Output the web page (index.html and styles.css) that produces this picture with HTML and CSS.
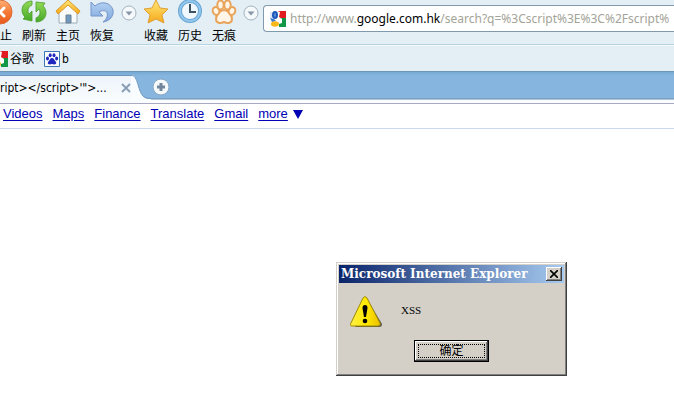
FILE: index.html
```html
<!DOCTYPE html>
<html lang="zh-CN">
<head>
<meta charset="utf-8">
<title>Google</title>
<link rel="stylesheet" href="styles.css">
</head>
<body>
<svg class="defs" aria-hidden="true">
  <defs>
    <linearGradient id="orange" x1="0" y1="0" x2="0" y2="1"><stop offset="0" stop-color="#ffb27a"/><stop offset=".5" stop-color="#f47a35"/><stop offset="1" stop-color="#e8591c"/></linearGradient>
    <linearGradient id="green" x1="0" y1="0" x2="0" y2="1"><stop offset="0" stop-color="#92d957"/><stop offset="1" stop-color="#45aa28"/></linearGradient>
    <linearGradient id="blue" x1="0" y1="0" x2="0" y2="1"><stop offset="0" stop-color="#b3d0f2"/><stop offset="1" stop-color="#7fa8dd"/></linearGradient>
    <linearGradient id="gold" x1="0" y1="0" x2="0" y2="1"><stop offset="0" stop-color="#ffe777"/><stop offset="1" stop-color="#f6a81b"/></linearGradient>
    <linearGradient id="warn" x1="0" y1="0" x2="1" y2="0"><stop offset="0" stop-color="#fff04a"/><stop offset=".55" stop-color="#ffe800"/><stop offset="1" stop-color="#eabf00"/></linearGradient>
    <symbol id="drop" viewBox="0 0 16 16"><circle cx="8" cy="8" r="7" fill="#f5f9fb" stroke="#a3b2bf"/><path d="M4.5 6.5h7L8 10.500z" fill="#8797a8"/></symbol>
    <symbol id="google" viewBox="0 0 16 16"><path d="M8 0h8v8H9z" fill="#e01b22"/><path d="M9 7h7v9H9z" fill="#119747"/><path d="M0 1h3v6H0z" fill="#dce8fa"/><path d="M7 0l3 1-1 5 3 2v4l-3 1-4-3 2-3z" fill="#fff"/><ellipse cx="5" cy="4" rx="3" ry="4" fill="#1b57b8"/><path d="M0 7l4 1 2 2-4 1z" fill="#3977cc"/><ellipse cx="5" cy="13" rx="4" ry="2.700" fill="#f9b817"/><ellipse cx="5" cy="4" rx="1" ry="2" fill="#5a8cd8"/></symbol>
  </defs>
</svg>

<header class="browser">
  <div class="toolbar">
    <button class="tool" type="button">
      <svg viewBox="0 0 26 26"><circle cx="13" cy="12" r="12" fill="url(#orange)" stroke="#dd6a38"/><path d="M9 8l8 8M17 8l-8 8" stroke="#fff" stroke-width="3" stroke-linecap="round"/></svg>
      <span>停止</span>
    </button>
    <button class="tool" type="button">
      <svg viewBox="0 0 26 26"><g fill="url(#green)" stroke="#4a9d2b" stroke-width=".8" stroke-linejoin="round"><path d="M11 1C5 1 1 5 1 10c0 3 1 5 3 7l-2 2 9 2V11l-3 3C6 10 7 7 11 5z"/><path d="M15 22c6 0 10-4 10-9 0-3-1-5-3-7l2-3-9-1v10l3-3c2 4 1 7-3 9z"/></g></svg>
      <span>刷新</span>
    </button>
    <button class="tool" type="button">
      <svg viewBox="0 0 26 26"><path d="M4 11v12h18V11l-9-8z" fill="#f8fafc" stroke="#9eacb8"/><path d="M11 15h5v8h-5z" fill="#7198bd" stroke="#6c8194"/><path d="M13 0L1 11l2 3L13 5l10 9 2-3z" fill="url(#gold)" stroke="#d99a25" stroke-linejoin="round"/></svg>
      <span>主页</span>
    </button>
    <button class="tool" type="button">
      <svg viewBox="0 0 26 26"><path d="M2 2v14h12l-4-4c5-3 10-1 8 5-1 2-2 4-4 5 7-1 11-6 10-12C22 3 13 0 6 6z" fill="url(#blue)" stroke="#7594c9" stroke-linejoin="round"/></svg>
      <span>恢复</span>
    </button>
    <button class="more" type="button" aria-label="更多恢复选项"><svg viewBox="0 0 16 16"><use href="#drop"/></svg></button>
    <button class="tool" type="button">
      <svg viewBox="0 0 26 26"><path d="M13 0l4 8 8 1-6 6 2 8-8-4-8 4 2-8-6-6 8-1z" fill="url(#gold)" stroke="#e0a037" stroke-linejoin="round"/></svg>
      <span>收藏</span>
    </button>
    <button class="tool" type="button">
      <svg viewBox="0 0 26 26"><circle cx="13" cy="11" r="10" fill="#f0f8fd" stroke="#67a5d4" stroke-width="4"/><circle cx="13" cy="11" r="10" fill="none" stroke="#91c5eb" stroke-width="2"/><path d="M13 4v8h6" fill="none" stroke="#3c5366" stroke-width="2"/></svg>
      <span>历史</span>
    </button>
    <button class="tool" type="button">
      <svg viewBox="0 0 26 26"><g fill="#fff6e8" stroke="#e9a45b" stroke-width="2"><path d="M13 10c-4 0-8 5-8 9 0 4 4 5 8 3 4 2 8 1 8-3 0-4-4-9-8-9z"/><ellipse cx="5" cy="11" rx="3.200" ry="4" transform="rotate(-20 5 11)"/><ellipse cx="9.500" cy="5" rx="3.200" ry="4.500"/><ellipse cx="16.500" cy="5" rx="3.200" ry="4.500"/><ellipse cx="21" cy="11" rx="3.200" ry="4" transform="rotate(20 21 11)"/></g></svg>
      <span>无痕</span>
    </button>
    <button class="more" type="button" aria-label="更多无痕选项"><svg viewBox="0 0 16 16"><use href="#drop"/></svg></button>
    <div class="address">
      <svg class="favicon" viewBox="0 0 16 16"><use href="#google"/></svg>
      <div class="url">http://www.<b>google.com.hk</b>/search?q=%3Cscript%3E%3C%2Fscript%</div>
    </div>
  </div>

  <nav class="bookmarks" aria-label="书签">
    <a href="#"><svg class="favicon" viewBox="0 0 16 16"><use href="#google"/></svg>谷歌</a>
    <a href="#"><svg class="favicon" viewBox="0 0 16 16"><path d="M.5.5h15v15H.5z" fill="#fff" stroke="#3c78b4"/><g fill="#2029bd"><ellipse cx="3.500" cy="7.500" rx="1.500" ry="2"/><ellipse cx="6.200" cy="4.300" rx="1.500" ry="2"/><ellipse cx="10" cy="4.300" rx="1.500" ry="2"/><ellipse cx="12.600" cy="7.500" rx="1.500" ry="2"/><path d="M8 7c-2 0-2 2-4 4-1 2 1 3 4 2 3 1 5 0 4-2-2-2-2-4-4-4z"/></g></svg>b</a>
  </nav>

  <div class="tabs">
    <div class="tab">
      <span class="tab-title">ript&gt;&lt;/script&gt;'"&gt;...</span>
      <button class="close-tab" type="button" aria-label="关闭标签"><svg viewBox="0 0 10 10"><path d="M1 1l8 8M9 1L1 9" stroke="#8a9fb5" stroke-width="2"/></svg></button>
    </div>
    <svg class="tab-edge" viewBox="0 0 20 28"><path d="M0 28V0c4 0 5 3 7 9 3 11 5 15 13 15v4z" fill="#fafdff"/><path d="M0 .5c4 0 5 3 7 9 3 11 5 14 13 14" fill="none" stroke="#6f97bd"/></svg>
    <button class="new-tab" type="button" aria-label="新标签"><svg viewBox="0 0 18 18"><circle cx="9" cy="9" r="8" fill="#f7fafc" stroke="#86a6c4"/><path d="M9 5v8M5 9h8" stroke="#71869b" stroke-width="3"/></svg></button>
  </div>
</header>

<main>
  <nav class="services" aria-label="Google">
    <a href="#">Videos</a><a href="#">Maps</a><a href="#">Finance</a><a href="#">Translate</a><a href="#">Gmail</a><a href="#">more</a><svg class="arrow" viewBox="0 0 10 10"><path d="M0 1h10L5 10z" fill="#0000b4"/></svg>
  </nav>
</main>

<section class="dialog" role="dialog" aria-labelledby="dialog-title">
  <header class="titlebar">
    <h1 id="dialog-title">Microsoft Internet Explorer</h1>
    <button class="close" type="button" aria-label="关闭"><svg viewBox="0 0 8 8"><path d="M0 0l8 8M8 0L0 8" stroke="#000" stroke-width="1.600"/></svg></button>
  </header>
  <div class="message">
    <svg class="warning" viewBox="0 0 32 32"><path d="M17 3L32 28q0 3-3 3H5z" fill="#55534d"/><path d="M13 2q2-3 4 0l13 25q1 3-2 3H2q-3 0-1-3z" fill="url(#warn)" stroke="#a18b00"/><path d="M12.500 12q0-3 2.500-3t2.500 3L16 21h-2z"/><circle cx="15" cy="25" r="2.300"/></svg>
    <p>XSS</p>
  </div>
  <button class="confirm" type="button"><span>确定</span></button>
</section>
</body>
</html>
```
FILE: styles.css
```css
* {
  box-sizing: border-box;
}

body {
  margin: 0;
  min-height: 100vh;
  overflow: hidden;
  position: relative;
  background: #fff;
  font: 12px/16px "DejaVu Sans Condensed", "Noto Sans CJK SC", sans-serif;
  color: #000;
}

button {
  padding: 0;
  border: 0;
  background: none;
  font: inherit;
  color: inherit;
}

svg {
  display: block;
  flex: none;
}

.defs {
  position: absolute;
  width: 0;
  height: 0;
}

.browser {
  background: #e3eff5;
}

.toolbar {
  display: flex;
  align-items: flex-start;
  height: 45px;
  margin-left: -17px;
  border-bottom: 1px solid #b5d3e2;
}

.tool {
  display: flex;
  flex: none;
  flex-direction: column;
  align-items: center;
  gap: 2px;
  width: 34px;
}

.tool svg {
  width: 26px;
  height: 26px;
}

.more {
  flex: none;
  width: 20px;
  padding: 5px 2px;
}

.more svg {
  width: 16px;
  height: 16px;
}

.address {
  display: flex;
  flex: 1;
  align-items: center;
  gap: 4px;
  min-width: 0;
  height: 27px;
  margin: 5px 0 0 2px;
  padding-left: 6px;
  border: 1px solid #8199ac;
  border-right: 0;
  border-radius: 4px 0 0 4px;
  background: #fff;
}

.favicon {
  width: 16px;
  height: 16px;
}

.url {
  overflow: hidden;
  white-space: nowrap;
  font-family: "Noto Sans", sans-serif;
  color: #a3a498;
}

.url b {
  font-weight: normal;
  color: #000;
}

.bookmarks {
  display: flex;
  gap: 10px;
  height: 26px;
  padding-top: 5px;
  margin-left: -8px;
  border-top: 1px solid #f5fafc;
}

.bookmarks a {
  display: flex;
  gap: 2px;
  color: #000;
  text-decoration: none;
}

.tabs {
  display: flex;
  align-items: flex-end;
  height: 33px;
  border-top: 1px solid #6f97b5;
  border-bottom: 1px solid #a9a9c4;
  background: linear-gradient(#78a9d4, #86b6df 4px, #86b6df 26px, #6d8ba8 27px, #fafdff 28px);
}

.tab {
  display: flex;
  align-items: center;
  gap: 14px;
  height: 28px;
  padding-bottom: 3px;
  border-top: 1px solid #6f97bd;
  background: linear-gradient(#edf4fa, #fafdff);
}

.tab-title {
  white-space: nowrap;
}

.close-tab svg {
  width: 10px;
  height: 10px;
}

.tab-edge {
  width: 20px;
  height: 28px;
}

.new-tab {
  align-self: flex-start;
  margin: 6px 0 0 1px;
}

.new-tab svg {
  width: 18px;
  height: 18px;
}

.services {
  display: flex;
  align-items: flex-start;
  gap: 10px;
  height: 25px;
  padding: 2px 0 0 3px;
  border-bottom: 1px solid #c9d7f1;
  font: 13px/16px "Liberation Sans", sans-serif;
}

.services a {
  color: #0000b4;
  text-underline-offset: 2px;
}

.arrow {
  width: 10px;
  height: 10px;
  margin: 3px 0 0 -5px;
}

.dialog {
  position: absolute;
  top: 262px;
  left: 336px;
  width: 231px;
  padding: 3px 3px 14px;
  background: #d4d0c8;
  box-shadow: inset -1px -1px #404040, inset 1px 1px #d4d0c8, inset -2px -2px #808080, inset 2px 2px #fff;
}

.titlebar {
  display: flex;
  align-items: center;
  justify-content: space-between;
  height: 18px;
  padding: 0 2px;
  background: linear-gradient(90deg, #0a246a, #a6caf0);
}

.titlebar h1 {
  margin: 0;
  font: bold 12px/16px "DejaVu Serif", serif;
  color: #fff;
  white-space: nowrap;
}

.close {
  display: grid;
  place-items: center;
  width: 16px;
  height: 14px;
  background: #d4d0c8;
  box-shadow: inset -1px -1px #404040, inset 1px 1px #fff, inset -2px -2px #808080;
}

.close svg {
  width: 8px;
  height: 8px;
}

.message {
  display: flex;
  gap: 19px;
  padding: 13px 11px 0;
}

.message p {
  margin: 6px 0 0;
  font: 11px/16px "Liberation Serif", serif;
}

.warning {
  width: 32px;
  height: 32px;
}

.confirm {
  display: block;
  width: 75px;
  height: 22px;
  margin: 12px auto 0;
  padding: 4px;
  border: 1px solid #000;
  background: #d4d0c8;
  box-shadow: inset -1px -1px #404040, inset 1px 1px #fff, inset -2px -2px #808080;
}

.confirm span {
  display: block;
  height: 14px;
  margin: -1px;
  border: 1px dotted #000;
  line-height: 12px;
}
```
